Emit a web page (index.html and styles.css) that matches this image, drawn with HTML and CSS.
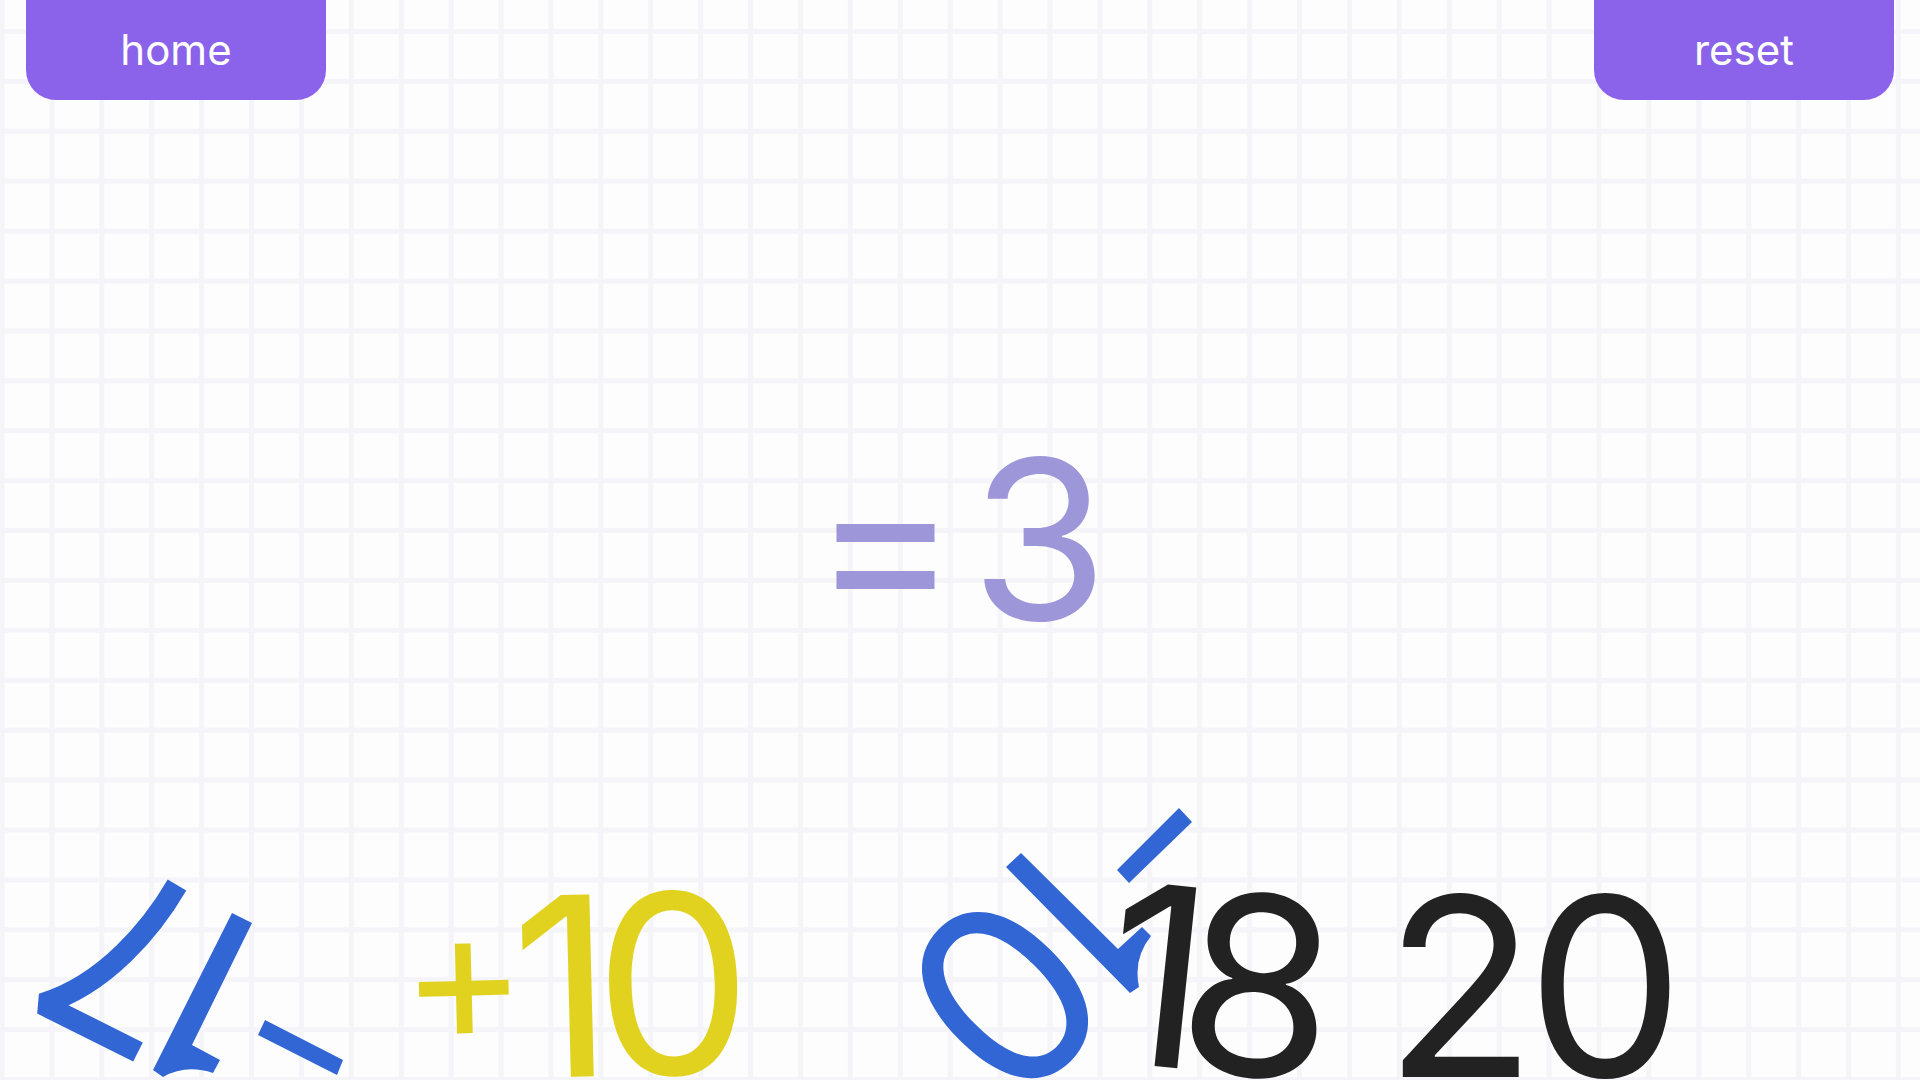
FILE: index.html
```html
<!DOCTYPE html>
<html lang="en">
<head>
<meta charset="utf-8">
<title>Make the target</title>
<link rel="stylesheet" href="styles.css">
</head>
<body>
<div class="app">
  <header class="topbar">
    <button class="btn">home</button>
    <button class="btn">reset</button>
  </header>
  <main class="target">
    <span class="target-text">=3</span>
  </main>
  <section class="tray">
    <svg class="shards" viewBox="0 780 1920 300" width="1920" height="300" aria-hidden="true">
      <g class="shard">
        <path class="shard-stroke" d="M177,885 C152,928 105,985 42,1004 L138,1052"/>
        <path d="M232,913 L252,923 L192,1045 L220,1060 L213,1073 Q186,1064 163,1077 L153,1070 Z"/>
        <path d="M265,1020 L343,1060 L337,1075 L258,1035 Z"/>
      </g>
      <g class="shard">
        <text class="shard-text" x="1005" y="1086" text-anchor="middle" transform="rotate(-45 1005 995)">0</text>
        <path d="M1006,867 L1021,853 L1118,949 L1142,927 L1151,936 Q1133,958 1139,987 L1130,993 Z"/>
        <path d="M1117,870 L1179,808 L1192,822 L1129,883 Z"/>
      </g>
    </svg>
    <span class="tile tile-yellow tile-plus10"><span class="op">+</span>10</span>
    <span class="tile tile-dark tile-18">18</span>
    <span class="tile tile-dark tile-20">20</span>
  </section>
</div>
</body>
</html>
```
FILE: styles.css
```css
html, body {
  margin: 0;
  padding: 0;
}

body {
  font-family: "Inter", "Liberation Sans", sans-serif;
  background-color: #fdfdfe;
  overflow: hidden;
}

.app {
  height: 100vh;
  display: grid;
  grid-template-rows: 100px 1fr 100px;
  background-color: #fdfdfe;
  background-image:
    linear-gradient(to right, #f4f4f9 0, #f4f4f9 4.5px, transparent 4.5px),
    linear-gradient(to bottom, #f4f4f9 0, #f4f4f9 4.5px, transparent 4.5px);
  background-size: 49.92px 49.92px;
  background-position: -0.5px 29px;
}

.topbar {
  display: flex;
  justify-content: space-between;
  align-items: flex-start;
  padding: 0 26px;
}

.btn {
  width: 300px;
  height: 100px;
  border: none;
  border-radius: 0 0 30px 30px;
  background: #8a63ea;
  color: #ffffff;
  font-family: "Inter", "Liberation Sans", sans-serif;
  font-size: 42px;
  font-weight: 400;
  line-height: 1;
  display: flex;
  align-items: center;
  justify-content: center;
  padding: 0;
  cursor: pointer;
}

.target {
  display: flex;
  align-items: center;
  justify-content: center;
}

.target-text {
  font-size: 222px;
  line-height: 1;
  color: #9d97da;
  font-weight: 400;
  letter-spacing: 12px;
  padding-left: 12px;
}

.tray {
  position: relative;
}

.shards {
  position: absolute;
  left: 0;
  bottom: 0;
  overflow: visible;
}

.shard {
  fill: #3166d4;
}

.shard-stroke {
  fill: none;
  stroke: #3166d4;
  stroke-width: 21.5;
  stroke-linejoin: bevel;
}

.shard-text {
  font-family: "Inter", "Liberation Sans", sans-serif;
  font-size: 250px;
  fill: #3166d4;
}

.tile {
  position: absolute;
  font-size: 250px;
  line-height: 1;
  white-space: nowrap;
  transform-origin: center;
}

.tile-yellow { color: #e0d21e; }
.tile-dark { color: #222222; }

.op {
  font-size: 190px;
  vertical-align: 37px;
  letter-spacing: 0;
  margin-right: -15px;
}

.tile-plus10 {
  left: 401px;
  bottom: -31px;
  letter-spacing: -19px;
  transform: rotate(-1.4deg);
}

.tile-18 {
  left: 1107px;
  bottom: -25px;
  letter-spacing: -27px;
  transform: rotate(6deg);
}

.tile-20 {
  left: 1384px;
  bottom: -31px;
  letter-spacing: -10px;
}
```
